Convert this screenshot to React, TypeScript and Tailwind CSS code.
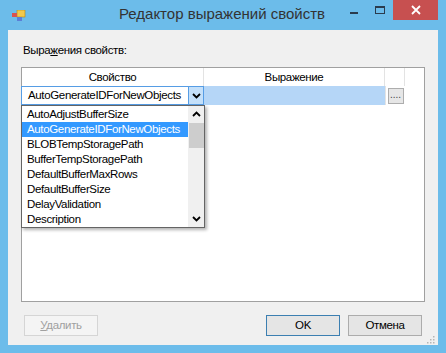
const items = [
  "AutoAdjustBufferSize",
  "AutoGenerateIDForNewObjects",
  "BLOBTempStoragePath",
  "BufferTempStoragePath",
  "DefaultBufferMaxRows",
  "DefaultBufferSize",
  "DelayValidation",
  "Description",
];

const Chevron = ({ up }: { up?: boolean }) => (
  <svg width="9" height="6" viewBox="0 0 9 6">
    <path
      d={up ? "M1 5 L4.5 1.5 L8 5" : "M1 1 L4.5 4.5 L8 1"}
      fill="none"
      stroke="#000"
      strokeWidth="1.8"
    />
  </svg>
);

const TitleBar = () => (
  <div className="h-[30px] flex items-start relative shrink-0">
    <svg width="14" height="12" viewBox="0 0 14 12" className="mt-[10px] ml-[4px]">
      <rect x="5" y="0" width="8" height="7" fill="#F2C94C" stroke="#B8860B" strokeWidth="0.6" />
      <rect x="0" y="3" width="5" height="4" fill="#D9534F" />
      <rect x="5" y="7" width="5" height="4" fill="#5B7FD6" />
    </svg>
    <div className="absolute left-[-10px] right-[-8px] top-[4px] text-center text-[15px] tracking-normal text-[#333] leading-[20px]">
      Редактор выражений свойств
    </div>
    <div className="ml-auto flex items-start">
      <div className="w-[26px] h-[20px] flex items-center justify-center">
        <div className="w-[8px] h-[2px] bg-[#2a3b4d] mt-[6px]" />
      </div>
      <div className="w-[26px] h-[20px] flex items-center justify-center">
        <div className="w-[10px] h-[8px] border border-t-2 border-[#2a3b4d]" />
      </div>
      <div className="w-[45px] h-[20px] bg-[#C75050] flex items-center justify-center">
        <svg width="10" height="10" viewBox="0 0 10 10">
          <path d="M1 1 L9 9 M9 1 L1 9" stroke="#fff" strokeWidth="1.8" />
        </svg>
      </div>
    </div>
  </div>
);

const DropList = () => (
  <div className="absolute left-[-1px] top-[37px] w-[184px] h-[123px] bg-white border border-[#646464] shadow-[2px_2px_3px_rgba(0,0,0,0.3)] flex">
    <div className="flex-1 flex flex-col pt-[1px] overflow-hidden">
      {items.map((t, i) => (
        <div
          key={t}
          className={
            i === 1
              ? "h-[15px] leading-[15px] pl-[5px] bg-[#3399FF] text-white whitespace-nowrap"
              : "h-[15px] leading-[15px] pl-[5px] text-black whitespace-nowrap"
          }
        >
          {t}
        </div>
      ))}
    </div>
    <div className="w-[16px] shrink-0 bg-[#F0F0F0] flex flex-col items-center">
      <div className="h-[16px] flex items-center justify-center">
        <Chevron up />
      </div>
      <div className="w-[15px] h-[25px] bg-[#CDCDCD] mt-[1px]" />
      <div className="flex-1" />
      <div className="h-[16px] flex items-center justify-center">
        <Chevron />
      </div>
    </div>
  </div>
);

const Grid = () => (
  <div className="h-[235px] bg-white border border-[#A0A0A0] relative flex flex-col">
    <div className="h-[18px] flex text-black">
      <div className="w-[182px] text-center leading-[18px] border-r border-[#E3E3E3]">Свойство</div>
      <div className="w-[181px] text-center leading-[18px] border-r border-[#E3E3E3]">Выражение</div>
      <div className="w-[20px] border-r border-[#E3E3E3]" />
    </div>
    <div className="h-[19px] flex">
      <div className="w-[183px] ml-[-1px] h-[19px] bg-white border border-[#569DE5] flex items-center overflow-hidden">
        <div className="flex-1 pl-[6px] leading-[17px] whitespace-nowrap overflow-hidden">
          AutoGenerateIDForNewObjects
        </div>
        <div className="w-[15px] shrink-0 h-[17px] bg-[#C4E0FA] border-l border-[#569DE5] flex items-center justify-center">
          <Chevron />
        </div>
      </div>
      <div className="w-[181px] bg-[#B5D6F7]" />
      <div className="w-[20px] flex items-center justify-center border-l border-[#E3E3E3]">
        <div className="w-[16px] h-[16px] bg-[#E6E6E6] border border-[#ADADAD] text-[10px] leading-[12px] text-center text-[#444] tracking-normal">
          ....
        </div>
      </div>
    </div>
    <DropList />
  </div>
);

const Btn = ({ children, cls }: { children: React.ReactNode; cls: string }) => (
  <div className={`w-[74px] h-[21px] flex items-center justify-center ${cls}`}>{children}</div>
);

export default function App() {
  return (
    <div
      className="w-[446px] h-[353px] bg-[#6CBCEA] flex flex-col px-[8px] pb-[8px] text-[11.5px] tracking-[-0.35px]"
      style={{ fontFamily: '"Liberation Sans", Arial, sans-serif' }}
    >
      <TitleBar />
      <div className="flex-1 bg-[#F0F0F0] flex flex-col px-[13px] relative">
        <div className="h-[37px] pt-[13px] pl-[2px] text-black leading-[15px]">
          Выра<span className="underline">ж</span>ения свойств:
        </div>
        <Grid />
        <div className="flex mt-[13px] ml-[3px] mr-[3px]">
          <Btn cls="bg-[#F4F4F4] border border-[#D5D5D5] text-[#A0A0A0]">
            <span>
              <span className="underline">У</span>далить
            </span>
          </Btn>
          <div className="flex-1" />
          <Btn cls="bg-[#E5E5E5] border border-[#3C7FB1] text-black">OK</Btn>
          <div className="w-[8px]" />
          <Btn cls="bg-[#E5E5E5] border border-[#ACACAC] text-black">Отмена</Btn>
        </div>
        <svg width="8" height="8" viewBox="0 0 8 8" className="absolute right-[3px] bottom-[1px]">
          <rect x="6" y="0" width="1.5" height="1.5" fill="#B5B5B5" />
          <rect x="3" y="3" width="1.5" height="1.5" fill="#B5B5B5" />
          <rect x="6" y="3" width="1.5" height="1.5" fill="#B5B5B5" />
          <rect x="0" y="6" width="1.5" height="1.5" fill="#B5B5B5" />
          <rect x="3" y="6" width="1.5" height="1.5" fill="#B5B5B5" />
          <rect x="6" y="6" width="1.5" height="1.5" fill="#B5B5B5" />
        </svg>
      </div>
    </div>
  );
}
